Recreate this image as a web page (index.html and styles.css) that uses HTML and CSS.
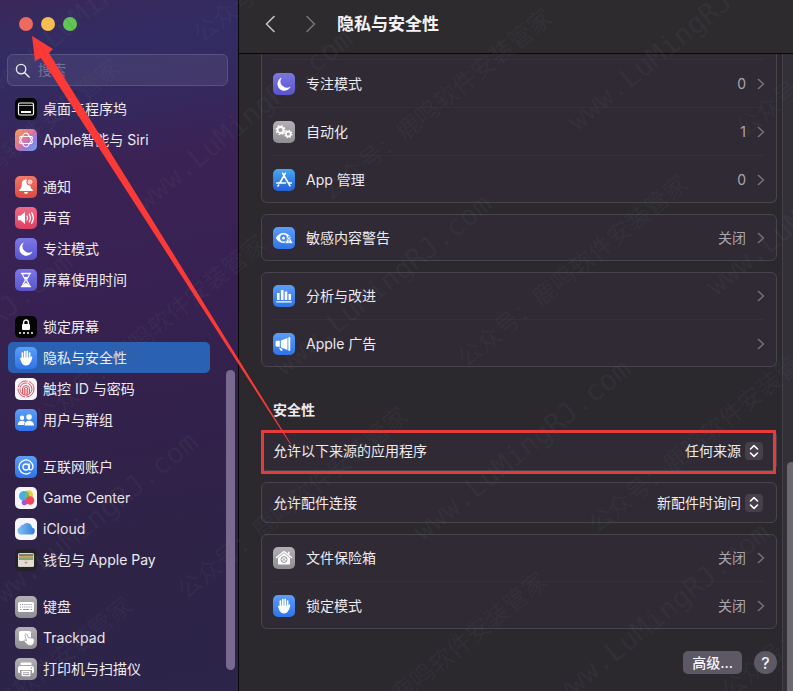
FILE: index.html
```html
<!DOCTYPE html>
<html lang="zh-CN">

<head>
    <meta charset="UTF-8">
    <meta name="viewport" content="width=device-width, initial-scale=1.0">
    <title>隐私与安全性</title>
    <link rel="stylesheet" href="styles.css">
</head>

<body>
    <!-- shared glyphs -->
    <svg class="defs" aria-hidden="true">
        <symbol id="moon" viewBox="0 0 22 22">
            <path fill="#fff" d="M8.800 4.600a6.800 6.800 0 1 0 8.800 8.800 6.300 6.300 0 0 1-8.800-8.800z" />
        </symbol>
        <symbol id="hand" viewBox="0 0 22 22">
            <g stroke="#fff" stroke-width="1.7" stroke-linecap="round" fill="none">
                <path d="M7.4 12V6M9.8 11V4.5M12.2 11V4.3M14.6 12V6M16.5 10.2l-1.2 4" />
            </g>
            <path fill="#fff" d="M6.5 10.5h9V14c0 2.800-1.800 4.500-4.500 4.500-2.400 0-4-1.500-5-4l-1-3.300c.6-.6 1.200-.5 1.500.3z" />
        </symbol>
        <symbol id="chevron" viewBox="0 0 8 12">
            <path d="M1.500 1.500 6.500 6l-5 4.500" fill="none" stroke="currentColor" stroke-width="1.500" stroke-linecap="round" stroke-linejoin="round" />
        </symbol>
        <symbol id="stepper" viewBox="0 0 18 18">
            <rect width="18" height="18" rx="4" fill="#45404a" />
            <path d="M5.500 7 9 3.700 12.500 7M5.500 11 9 14.300 12.500 11" fill="none" stroke="#fff" stroke-width="1.600" stroke-linecap="round" stroke-linejoin="round" />
        </symbol>
    </svg>

    <aside class="sidebar">
        <div class="lights">
            <button class="light close" aria-label="关闭窗口"></button>
            <button class="light minimize" aria-label="最小化"></button>
            <button class="light zoom" aria-label="缩放"></button>
        </div>
        <div class="search">
            <svg viewBox="0 0 16 16" aria-hidden="true"><circle cx="6.500" cy="6.500" r="5" /><path d="M10.300 10.300 15 15" /></svg>
            <input type="search" placeholder="搜索" aria-label="搜索">
        </div>

        <nav>
            <div class="group">
                <a href="#"><svg class="icon black" viewBox="0 0 22 22"><rect x="3.500" y="5" width="15" height="12" rx="1.500" fill="none" stroke="#fff" stroke-width="1.200" /><path d="M4 7.500h14" stroke="#aaa" /><path d="M6 14h10" stroke="#fff" stroke-width="2" /></svg>桌面与程序坞</a>
                <a href="#"><svg class="icon siri" viewBox="0 0 22 22"><g fill="none" stroke="#fff" stroke-width="1.100" stroke-linejoin="round"><path d="M11 4q1.500 0 2.500 1.800l3.500 6q1 2-.6 2.700H5.600q-1.600-.7-.6-2.700l3.500-6Q9.500 4 11 4z" /><path d="M11 4q1.500 0 2.500 1.800l3.500 6q1 2-.6 2.700H5.600q-1.600-.7-.6-2.700l3.500-6Q9.500 4 11 4z" transform="rotate(180 11 11)" /></g></svg>Apple智能与 Siri</a>
            </div>
            <div class="group">
                <a href="#"><svg class="icon red" viewBox="0 0 22 22"><path fill="#fff" d="M11 3.500c-3 0-4.200 2.200-4.200 5 0 3-1 4.200-2.600 5.500v1h13.600v-1c-1.600-1.300-2.600-2.500-2.600-5.500 0-2.800-1.200-5-4.200-5zM9 16h4c-.3 1.300-1 2-2 2s-1.700-.7-2-2z" /><circle cx="15" cy="6" r="3.200" fill="#f9c8c2" stroke="#e5554c" /></svg>通知</a>
                <a href="#"><svg class="icon pink" viewBox="0 0 22 22"><path fill="#fff" d="M3 8.700h2.500L10 5v12l-4.500-3.700H3z" /><path fill="none" stroke="#fff" stroke-width="1.300" stroke-linecap="round" d="M12 9q1.300 2 0 4M14.300 7.300q2.300 3.700 0 7.400M16.600 5.700q3.500 5.300 0 10.600" /></svg>声音</a>
                <a href="#"><svg class="icon indigo"><use href="#moon" /></svg>专注模式</a>
                <a href="#"><svg class="icon indigo" viewBox="0 0 22 22"><path fill="none" stroke="#fff" stroke-width="1.500" stroke-linecap="round" d="M6.500 4.500h9M6.500 17.500h9" /><path fill="none" stroke="#fff" stroke-width="1.200" d="M7.700 5c0 3.500 2.600 4 2.600 6s-2.600 2.500-2.600 6h6.600c0-3.500-2.600-4-2.600-6s2.600-2.500 2.600-6" /><path fill="#fff" d="M8.700 8h4.600L11 10.500zM8 17c0-1.600 1.500-2.500 3-3.500 1.500 1 3 1.900 3 3.500z" /></svg>屏幕使用时间</a>
            </div>
            <div class="group">
                <a href="#"><svg class="icon black" viewBox="0 0 22 22"><rect x="7" y="8" width="8" height="6" rx="1" fill="#fff" /><path d="M8.600 8V6.400a2.400 2.400 0 0 1 4.800 0V8" fill="none" stroke="#fff" stroke-width="1.400" /><g fill="#fff"><circle cx="5" cy="17" r="1" /><circle cx="9" cy="17" r="1" /><circle cx="13" cy="17" r="1" /><circle cx="17" cy="17" r="1" /></g></svg>锁定屏幕</a>
                <a href="#" class="active" aria-current="page"><svg class="icon blue"><use href="#hand" /></svg>隐私与安全性</a>
                <a href="#"><svg class="icon white" viewBox="0 0 22 22"><g fill="none" stroke="#dc5660" stroke-width="1"><circle cx="11" cy="11" r="8" stroke-dasharray="12 1.500" /><circle cx="11" cy="11" r="6" stroke-dasharray="9 1" /><path d="M7.500 16V11a3.500 3.500 0 0 1 7 0v5M9.300 17v-6a1.700 1.700 0 0 1 3.400 0v6.500M11 11v7" /></g></svg>触控 ID 与密码</a>
                <a href="#"><svg class="icon blue" viewBox="0 0 22 22"><g fill="#fff"><circle cx="7" cy="8.800" r="2.200" /><path d="M2.800 16c0-3 1.800-4.300 4.200-4.300 1.300 0 2.300.4 3 1.200-.7.900-1 1.900-1 3.100z" /><circle cx="14" cy="8" r="2.800" /><path d="M9.500 16.500c0-3.300 1.900-4.800 4.500-4.800s5 1.500 5 4.800z" /></g></svg>用户与群组</a>
            </div>
            <div class="group">
                <a href="#"><svg class="icon blue" viewBox="0 0 22 22"><g fill="none" stroke="#fff" stroke-width="1.300" stroke-linecap="round"><circle cx="11" cy="11" r="3" /><path d="M14.200 8v4.200c0 2.700 3.800 2.100 3.800-1.400a7 7 0 1 0-3 5.900" /></g></svg>互联网账户</a>
                <a href="#"><svg class="icon white" viewBox="0 0 22 22"><circle cx="13.500" cy="8" r="4.700" fill="#f5c93a" /><circle cx="9" cy="9" r="5" fill="#46aee8" /><path d="M12 4.800a5 5 0 0 1 0 8.500 5 5 0 0 1 0-8.500z" fill="#65c466" /><circle cx="9.500" cy="15.500" r="2.800" fill="#9a58de" /><circle cx="15" cy="13.500" r="4.300" fill="#f0475e" /></svg>Game Center</a>
                <a href="#"><svg class="icon white" viewBox="0 0 22 22"><defs><linearGradient id="cloud" x2="1"><stop stop-color="#7fc2ee" /><stop offset="1" stop-color="#3380dd" /></linearGradient></defs><path fill="url(#cloud)" d="M6 16.500a3.700 3.700 0 0 1-1-7.200 3 3 0 0 1 3.200-2.500A5 5 0 0 1 17 9.400a3.600 3.600 0 0 1-.5 7.100z" /></svg>iCloud</a>
                <a href="#"><svg class="icon dark" viewBox="0 0 22 22"><rect x="3" y="4" width="16" height="14" rx="1.500" fill="#d9d4c8" /><path fill="#7d8172" d="M4 5h14v2H4z" /><path fill="#c3a45c" d="M4 7h14v2H4z" /><path fill="#86a474" d="M4 9h14v2H4z" /><path fill="#e2ded4" d="M3 11h5c1 0 1.500 2 3 2s2-2 3-2h5v6H3z" /><path fill="#dc6254" d="M9 12q2 2.500 4 0l-2 3z" /></svg>钱包与 Apple Pay</a>
            </div>
            <div class="group">
                <a href="#"><svg class="icon gray" viewBox="0 0 22 22"><rect x="3" y="6" width="16" height="10" rx="1.500" fill="#fff" /><path d="M5 8.500h12M5 11h12" stroke="#99979c" stroke-width="1.200" stroke-dasharray="1.200 .9" /><path d="M5 13.500h1.500M8 13.500h6M15.500 13.500H17" stroke="#99979c" stroke-width="1.200" /></svg>键盘</a>
                <a href="#"><svg class="icon gray" viewBox="0 0 22 22"><rect x="4" y="4" width="12" height="10" rx="1.500" fill="#fff" /><path fill="#fff" stroke="#9b999e" stroke-width=".8" d="M10.500 7c.9-.4 1.500.2 1.800 1l1 2.500 4 .6c1.400.3 2 1.200 2 2.400 0 3-1.200 5-4.300 5-2.500 0-3.600-1.600-6.300-4.700.3-1 1.400-1 2.800.2L10 8.300c-.2-.6 0-1.100.5-1.300z" /></svg>Trackpad</a>
                <a href="#"><svg class="icon gray" viewBox="0 0 22 22"><path fill="#fff" d="M6.500 4.500h9c.6 0 1 .4 1 1V7h-11V5.500c0-.6.4-1 1-1zM5 8h12a2 2 0 0 1 2 2v3.500c0 .8-.5 1.500-1.500 1.500H17v-3H5v3h-.5C3.500 15 3 14.300 3 13.500V10a2 2 0 0 1 2-2z" /><rect x="6.500" y="12.800" width="9" height="5.500" rx=".8" fill="#fff" /><path d="M8 14.700h6M8 16.500h6" stroke="#aaa8ad" /><circle cx="16.500" cy="10" r=".7" fill="#8e8c91" /></svg>打印机与扫描仪</a>
            </div>
        </nav>
        <div class="side-thumb"></div>
    </aside>

    <main>
        <header>
            <button class="arrow-btn back" aria-label="后退"><svg viewBox="0 0 10 18"><path d="M9 1.500 1.500 9 9 16.500" /></svg></button>
            <button class="arrow-btn forward" aria-label="前进"><svg viewBox="0 0 10 18"><path d="M1 1.500 8.500 9 1 16.500" /></svg></button>
            <h1>隐私与安全性</h1>
        </header>

        <div class="scroll">
            <div class="content">
                <section class="card clipped">
                    <a class="row" href="#">
                        <svg class="icon indigo"><use href="#moon" /></svg>
                        <span class="name">专注模式</span><span class="value">0</span>
                        <svg class="chevron"><use href="#chevron" /></svg>
                    </a>
                    <a class="row" href="#">
                        <svg class="icon gray" viewBox="0 0 22 22"><g fill="none" stroke="#fff"><circle cx="7.500" cy="9" r="3" stroke-width="1.800" /><circle cx="7.500" cy="9" r="4.400" stroke-width="1.400" stroke-dasharray="1.700 1.750" /><circle cx="15.300" cy="13" r="2.400" stroke-width="1.700" /><circle cx="15.300" cy="13" r="3.600" stroke-width="1.300" stroke-dasharray="1.400 1.430" /></g></svg>
                        <span class="name">自动化</span><span class="value">1</span>
                        <svg class="chevron"><use href="#chevron" /></svg>
                    </a>
                    <a class="row" href="#">
                        <svg class="icon azure" viewBox="0 0 22 22"><path d="M12.300 4.300 6.800 14M9.700 4.300l7.300 12.500M3.800 14h8.700M15.500 14h2.800M5.600 16l-.6 1" fill="none" stroke="#fff" stroke-width="1.600" stroke-linecap="round" /></svg>
                        <span class="name">App 管理</span><span class="value">0</span>
                        <svg class="chevron"><use href="#chevron" /></svg>
                    </a>
                </section>

                <section class="card">
                    <a class="row" href="#">
                        <svg class="icon blue" viewBox="0 0 22 22"><path fill="#fff" d="M2.800 11c2-3.300 4.700-5 7.700-5s5.700 1.700 7.700 5c-2 3.300-4.700 5-7.700 5s-5.700-1.700-7.700-5z" /><circle cx="10.500" cy="11" r="3.400" fill="#408bef" /><circle cx="10.500" cy="11" r="1.500" fill="#fff" /><path fill="#fff" stroke="#408bef" stroke-width=".8" d="m16 9 4.200 7.500h-8.400z" /><path d="M16 11.800v2M16 14.600v.9" stroke="#408bef" /></svg>
                        <span class="name">敏感内容警告</span><span class="value">关闭</span>
                        <svg class="chevron"><use href="#chevron" /></svg>
                    </a>
                </section>

                <section class="card">
                    <a class="row" href="#">
                        <svg class="icon blue" viewBox="0 0 22 22"><path fill="#fff" d="M4 8h2.600v7H4zM7.900 5h2.600v10H7.900zM11.700 6.500h2.600V15h-2.600zM15.500 9H18v6h-2.500zM3.300 16.200h15.400v1.300H3.300z" /></svg>
                        <span class="name">分析与改进</span>
                        <svg class="chevron"><use href="#chevron" /></svg>
                    </a>
                    <a class="row" href="#">
                        <svg class="icon blue" viewBox="0 0 22 22"><path fill="#fff" d="M3.500 7.800h3.300v6H3.500c-.7 0-1-.8-1-3s.3-3 1-3zM7.800 7.500 14.500 5v12l-6.700-2.800zM6 14.600l3.500 1.300-.4 2c-1.200.3-2.300-.8-3.100-3.300z" /><rect x="15.300" y="4" width="2" height="14" rx="1" fill="#fff" /></svg>
                        <span class="name">Apple 广告</span>
                        <svg class="chevron"><use href="#chevron" /></svg>
                    </a>
                </section>

                <h2>安全性</h2>

                <section class="card marked">
                    <div class="option">
                        <label for="sources">允许以下来源的应用程序</label>
                        <span class="popup">
                            <select id="sources"><option>任何来源</option></select>
                            <svg><use href="#stepper" /></svg>
                        </span>
                    </div>
                </section>

                <section class="card">
                    <div class="option">
                        <label for="accessories">允许配件连接</label>
                        <span class="popup">
                            <select id="accessories"><option>新配件时询问</option></select>
                            <svg><use href="#stepper" /></svg>
                        </span>
                    </div>
                </section>

                <section class="card">
                    <a class="row" href="#">
                        <svg class="icon gray" viewBox="0 0 22 22"><path d="m3.500 10.500 7.500-6 7.500 6" fill="none" stroke="#fff" stroke-width="1.500" stroke-linecap="round" stroke-linejoin="round" /><path fill="#fff" d="M14.800 4.800h1.700v3l-1.700-1.400zM5 11l6-4.700 6 4.700v5.500c0 .7-.4 1-1 1H6c-.6 0-1-.3-1-1z" /><circle cx="11" cy="12.500" r="3" fill="none" stroke="#98969b" /><path d="m9 10.500 4 4M13 10.500l-4 4" stroke="#98969b" stroke-width=".8" /></svg>
                        <span class="name">文件保险箱</span><span class="value">关闭</span>
                        <svg class="chevron"><use href="#chevron" /></svg>
                    </a>
                    <a class="row" href="#">
                        <svg class="icon blue"><use href="#hand" /></svg>
                        <span class="name">锁定模式</span><span class="value">关闭</span>
                        <svg class="chevron"><use href="#chevron" /></svg>
                    </a>
                </section>

                <footer>
                    <button class="advanced">高级...</button>
                    <button class="help" aria-label="帮助">?</button>
                </footer>
            </div>
            <div class="track"><div class="thumb"></div></div>
        </div>
    </main>

    <!-- watermark, one text per diagonal line -->
    <svg class="overlay watermark" aria-hidden="true">
        <g class="site">
            <text transform="translate(0 92) rotate(-39)">www.LuMingRJ.com</text>
            <text transform="translate(-135 435) rotate(-39)">www.LuMingRJ.com</text>
            <text transform="translate(145 212) rotate(-39)">www.LuMingRJ.com</text>
            <text transform="translate(284 377) rotate(-39)">www.LuMingRJ.com</text>
            <text transform="translate(423 542) rotate(-39)">www.LuMingRJ.com</text>
            <text transform="translate(562 706) rotate(-39)">www.LuMingRJ.com</text>
            <text transform="translate(-10 615) rotate(-39)">www.LuMingRJ.com</text>
            <text transform="translate(577 132) rotate(-39)">www.LuMingRJ.com</text>
            <text transform="translate(716 297) rotate(-39)">www.LuMingRJ.com</text>
        </g>
        <g>
            <text transform="translate(-102 252) rotate(-39)">公众号：鹿鸣软件安装管家</text>
            <text transform="translate(44 428) rotate(-39)">公众号：鹿鸣软件安装管家</text>
            <text transform="translate(186 600) rotate(-39)">公众号：鹿鸣软件安装管家</text>
            <text transform="translate(325 765) rotate(-39)">公众号：鹿鸣软件安装管家</text>
            <text transform="translate(202 44) rotate(-39)">公众号：鹿鸣软件安装管家</text>
            <text transform="translate(330 202) rotate(-39)">公众号：鹿鸣软件安装管家</text>
            <text transform="translate(466 368) rotate(-39)">公众号：鹿鸣软件安装管家</text>
            <text transform="translate(597 534) rotate(-39)">公众号：鹿鸣软件安装管家</text>
            <text transform="translate(730 700) rotate(-39)">公众号：鹿鸣软件安装管家</text>
            <text transform="translate(745 138) rotate(-39)">公众号：鹿鸣软件安装管家</text>
            <text transform="translate(-90 790) rotate(-39)">公众号：鹿鸣软件安装管家</text>
        </g>
    </svg>

    <!-- arrow from the marked row to the close button -->
    <svg class="overlay" aria-hidden="true">
        <path fill="#fb3a37" d="M32 36 53 49 49 53 291 444h-1L41 58l-6 3z" />
    </svg>
</body>

</html>
```

FILE: styles.css
```css
* {
    box-sizing: border-box;
}

body {
    margin: 0;
    min-height: 100vh;
    display: flex;
    position: relative;
    overflow: hidden;
    background-color: #2b282e;
    color: #eeebf1;
    font-family: Inter, "Noto Sans CJK SC", sans-serif;
    font-size: 14px;
    line-height: 20px;
}

a {
    color: inherit;
    text-decoration: none;
}

button,
input,
select {
    font: inherit;
    color: inherit;
    border: none;
    padding: 0;
    margin: 0;
    background: none;
}

.defs {
    position: absolute;
    width: 0;
    height: 0;
}

/* sidebar */
.sidebar {
    position: relative;
    flex: 0 0 239px;
    min-width: 0;
    padding: 17px 10px 0 7px;
    border-right: 1px solid #08070a;
    background: linear-gradient(170deg, #3a2858 0, #322c64 60px, #35295e 120px, #3b2255 180px, #372152 320px, #33214b 430px, #2e2347 560px, #2c2449 100%);
}

.lights {
    display: flex;
    gap: 8px;
    padding-left: 12px;
}

.light {
    width: 14px;
    height: 14px;
    border-radius: 50%;
}

.close {
    background-color: #ee6a5f;
}

.minimize {
    background-color: #f6be50;
}

.zoom {
    background-color: #62c655;
}

.search {
    display: flex;
    align-items: center;
    gap: 8px;
    height: 32px;
    margin-top: 23px;
    padding: 0 7px;
    border: 1px solid #575281;
    border-radius: 6px;
    background-color: rgba(255, 255, 255, 0.07);
}

.search svg {
    flex: none;
    width: 15px;
    height: 15px;
    fill: none;
    stroke: #f0edf5;
    stroke-width: 1.5;
    stroke-linecap: round;
}

.search input {
    width: 100%;
    min-width: 0;
    outline: none;
}

.search input::placeholder {
    color: #76719a;
    opacity: 1;
}

nav {
    display: flex;
    flex-direction: column;
    gap: 16px;
    padding: 7px 18px 0 1px;
}

.group a {
    display: flex;
    align-items: center;
    gap: 6px;
    height: 31px;
    padding: 0 7px;
    border-radius: 5px;
    white-space: nowrap;
}

.group .active {
    background-color: #2b61b2;
}

.side-thumb {
    position: absolute;
    right: 3px;
    top: 370px;
    bottom: 21px;
    width: 9px;
    border-radius: 5px;
    background-color: #79698f;
}

/* icon tiles */
.icon {
    flex: none;
    width: 22px;
    height: 22px;
    border-radius: 5px;
}

.black {
    background-color: #050506;
}

.dark {
    background-color: #252329;
}

.white {
    background-color: #f8f5fa;
}

.red {
    background: linear-gradient(#f0796b, #dc4840);
}

.pink {
    background: linear-gradient(#ef6a85, #dc3f63);
}

.indigo {
    background: linear-gradient(#7c78e6, #5a53cf);
}

.blue {
    background: linear-gradient(#5b9df7, #2f74e8);
}

.azure {
    background: linear-gradient(#4aa6f0, #235fd6);
}

.gray {
    background: linear-gradient(#b2b0b4, #8f8d92);
}

.siri {
    background: linear-gradient(135deg, #f0a04b, #e8759a 45%, #a178dc 65%, #5da9ee);
}

/* right side */
main {
    flex: 1;
    min-width: 0;
    display: flex;
    flex-direction: column;
}

header {
    display: flex;
    align-items: center;
    height: 54px;
    padding: 0 26px 6px;
    border-bottom: 1px solid #08070a;
    background-color: #2e2b2e;
}

.arrow-btn {
    display: flex;
    width: 10px;
    height: 18px;
}

.arrow-btn svg {
    width: 10px;
    height: 18px;
    fill: none;
    stroke: #c5c2c8;
    stroke-width: 1.6;
    stroke-linecap: round;
    stroke-linejoin: round;
}

.forward {
    margin: 0 21px 0 31px;
}

.forward svg {
    stroke: #777379;
}

h1 {
    margin: 0;
    font-size: 17px;
    font-weight: 700;
    line-height: 24px;
    color: #f4f2f6;
}

.scroll {
    flex: 1;
    display: flex;
}

.content {
    flex: 1;
    min-width: 0;
    display: flex;
    flex-direction: column;
    gap: 11px;
    padding: 0 5px 17px 22px;
}

.card {
    position: relative;
    padding: 0 11px;
    border: 1px solid #48444d;
    border-radius: 6px;
    background-color: #2f2a34;
}

/* top of this card is scrolled under the header */
.clipped {
    padding-top: 4px;
    border-top: none;
    border-radius: 0 0 6px 6px;
}

.row {
    position: relative;
    display: flex;
    align-items: center;
    height: 45px;
}

.row + .row,
.clipped .row {
    margin-top: 3px;
}

.row + .row::before,
.clipped .row::before {
    content: "";
    position: absolute;
    top: -2px;
    left: 0;
    right: 0;
    height: 1px;
    background-color: #35303a;
}

.name {
    flex: 1;
    padding-left: 11px;
}

.value {
    color: #aba6b0;
    padding-right: 11px;
}

.chevron {
    width: 8px;
    height: 12px;
    color: #77727b;
}

h2 {
    margin: 0;
    padding: 22px 0 0 12px;
    font-size: 14px;
    font-weight: 700;
    line-height: 19px;
}

.option {
    display: flex;
    align-items: center;
    justify-content: space-between;
    height: 39px;
    padding-right: 2px;
}

.popup {
    position: relative;
    display: flex;
    align-items: center;
}

.popup select {
    appearance: none;
    height: 22px;
    padding-right: 22px;
}

.popup svg {
    position: absolute;
    right: 0;
    width: 18px;
    height: 18px;
    pointer-events: none;
}

.marked::after {
    content: "";
    position: absolute;
    inset: -1px 0 -4px -1px;
    border: 3px solid #e53b3d;
    pointer-events: none;
}

footer {
    display: flex;
    justify-content: flex-end;
    gap: 12px;
    padding-top: 11px;
}

footer button {
    height: 23px;
    background-color: #5d5863;
    color: #f6f4f8;
    font-weight: 500;
}

.advanced {
    padding: 0 9px;
    border-radius: 5px;
}

.help {
    width: 23px;
    border-radius: 50%;
    font-size: 16px;
}

.track {
    position: relative;
    width: 11px;
    border-left: 1px solid #444047;
    background-color: #343038;
}

.thumb {
    position: absolute;
    top: 408px;
    right: -3px;
    bottom: 0;
    width: 9px;
    border-radius: 5px 5px 0 0;
    background-color: #6c686f;
}

/* drawn above the window */
.overlay {
    position: absolute;
    top: 0;
    left: 0;
    width: 100%;
    height: 100%;
    pointer-events: none;
}

.watermark {
    fill: rgba(95, 105, 110, 0.12);
    font-size: 24px;
}

.site {
    font-family: "DejaVu Sans Mono", monospace;
    font-size: 28px;
}
```
